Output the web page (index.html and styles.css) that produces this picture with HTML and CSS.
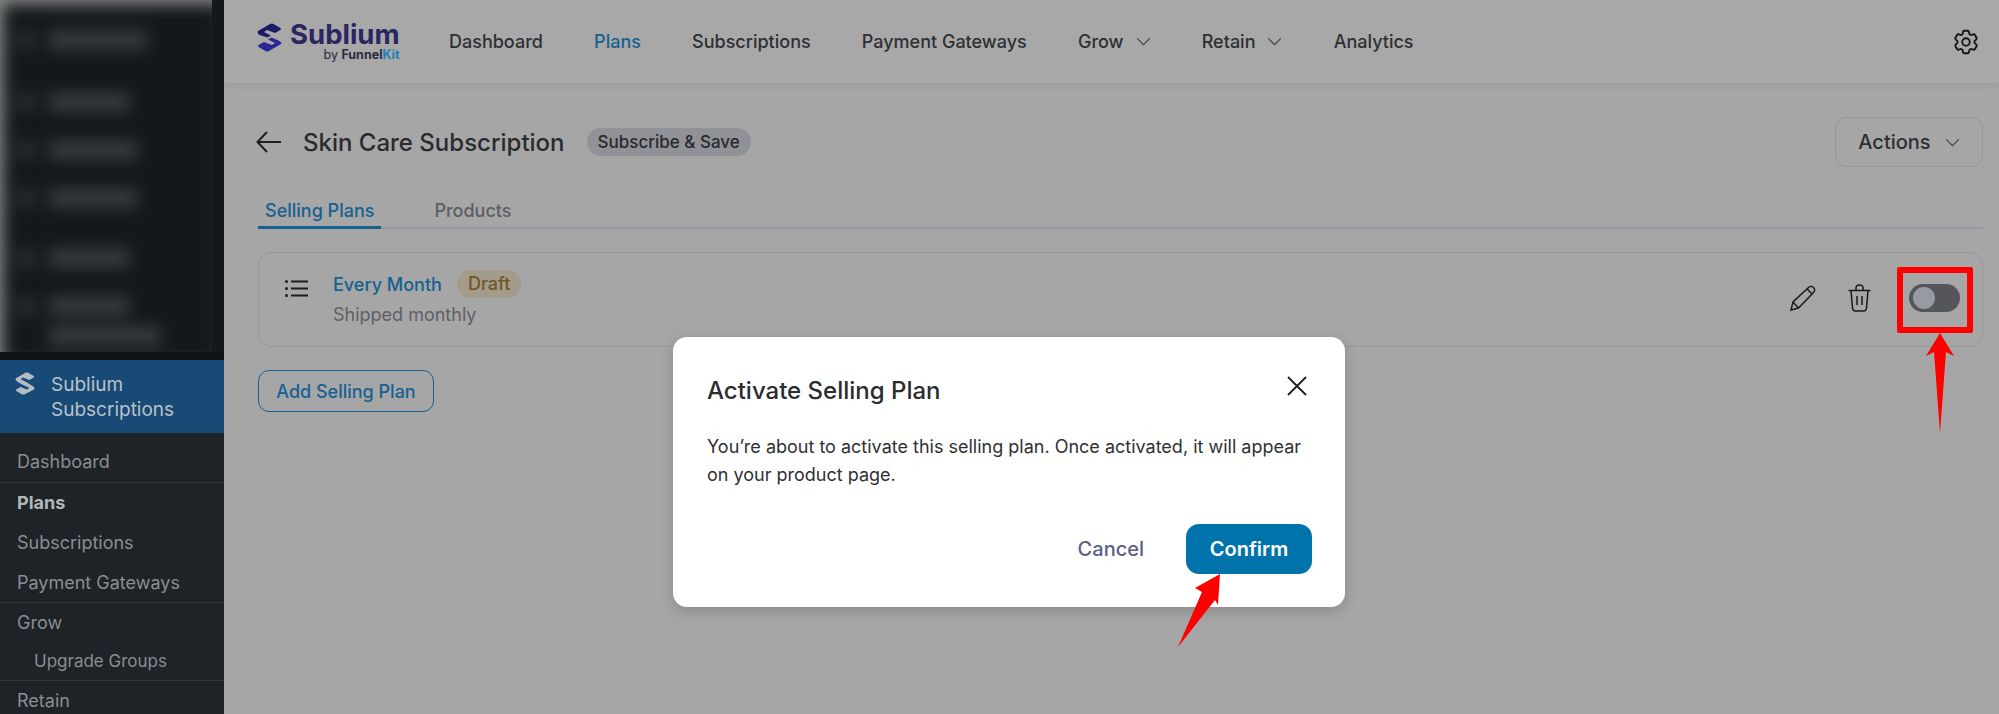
FILE: index.html
```html
<!DOCTYPE html>
<html lang="en">
<head>
    <meta charset="UTF-8">
    <meta name="viewport" content="width=device-width, initial-scale=1.0">
    <title>Sublium - Skin Care Subscription</title>
    <link rel="stylesheet" href="styles.css">
</head>
<body>
    <div class="page">
        <aside class="sidebar">
            <div class="sidebar-top">
                <div class="blurred">
                    <div class="blur-row row-a"><i></i><b class="w-a"></b></div>
                    <div class="blur-row row-b"><i></i><b class="w-b"></b></div>
                    <div class="blur-row row-c"><i></i><b class="w-c"></b></div>
                    <div class="blur-row row-c"><i></i><b class="w-c"></b></div>
                    <div class="blur-row row-d"><i></i><b class="w-b"></b></div>
                    <div class="blur-row row-c"><i></i><b class="w-b"></b></div>
                    <div class="blur-row row-e"><i class="empty"></i><b class="w-d"></b></div>
                </div>
                <div class="strip"></div>
            </div>
            <div class="sidebar-gap"></div>
            <div class="sidebar-active">
                <svg class="sidebar-logo" viewBox="0 0 25 29">
                    <path d="M1 8 13 1c1.200-.7 2.300-.7 3.500 0L23 4.800c1.200.7 1.200 1.700 0 2.400L18 10 10 7 7 9l7 3.500 8.500 5.500c2 1.200 2.300 3.300 1.500 4L12 28c-1.200.7-2.300.7-3.500 0L2 24.200c-1.200-.7-1.200-1.700 0-2.400L7 19l8 3 3-2-8-3.500L2.500 12C.5 10.800.2 8.700 1 8Z" fill="#b4bcc3"/>
                </svg>
                <span>Sublium<br>Subscriptions</span>
            </div>
            <nav class="side-menu">
                <div class="side-group">
                    <a>Dashboard</a>
                </div>
                <div class="side-group">
                    <a class="current">Plans</a>
                    <a>Subscriptions</a>
                    <a class="short">Payment Gateways</a>
                </div>
                <div class="side-group">
                    <a>Grow</a>
                    <a class="sub short">Upgrade Groups</a>
                </div>
                <div class="side-group">
                    <a>Retain</a>
                </div>
            </nav>
        </aside>

        <main class="main">
            <header class="topbar">
                <div class="brand">
                    <svg class="brand-mark" viewBox="0 0 25 29">
                        <path d="M1 8 13 1c1.200-.7 2.300-.7 3.500 0L23 4.800c1.200.7 1.200 1.700 0 2.400L18 10 10 7 7 9l7 3.500-3.500 2L2.500 12C.5 10.800.2 8.700 1 8Z" fill="#1d1a66"/>
                        <path d="M24 21 12 28c-1.200.7-2.300.7-3.500 0L2 24.200c-1.200-.7-1.200-1.700 0-2.400L7 19l8 3 3-2-7-3.500 3.500-2L22.500 18c2 1.200 2.300 2.300 1.500 3Z" fill="#2a2794"/>
                    </svg>
                    <div class="brand-text">
                        <div class="brand-name">Sublium</div>
                        <div class="brand-by">by <b>Funnel</b><b class="kit">Kit</b></div>
                    </div>
                </div>
                <nav class="nav">
                    <a>Dashboard</a>
                    <a class="active">Plans</a>
                    <a>Subscriptions</a>
                    <a>Payment Gateways</a>
                    <a>Grow <svg class="chev" viewBox="0 0 16 10"><path d="M1 1.500 8 8.500 15 1.500"/></svg></a>
                    <a>Retain <svg class="chev" viewBox="0 0 16 10"><path d="M1 1.500 8 8.500 15 1.500"/></svg></a>
                    <a>Analytics</a>
                </nav>
                <svg class="gear" viewBox="0 0 24 24" fill="none" stroke="#151515" stroke-width="1.500">
                    <path d="M9.594 3.94c.09-.542.56-.94 1.11-.94h2.593c.55 0 1.02.398 1.11.94l.213 1.281c.063.374.313.686.645.87.074.04.147.083.22.127.325.196.72.257 1.075.124l1.217-.456a1.125 1.125 0 0 1 1.37.49l1.296 2.247a1.125 1.125 0 0 1-.26 1.431l-1.003.827c-.293.241-.438.613-.43.992a7.723 7.723 0 0 1 0 .255c-.008.378.137.75.43.991l1.004.827c.424.35.534.955.26 1.43l-1.298 2.247a1.125 1.125 0 0 1-1.369.491l-1.217-.456c-.355-.133-.75-.072-1.076.124a6.47 6.47 0 0 1-.22.128c-.331.183-.581.495-.644.869l-.213 1.281c-.09.543-.56.94-1.11.94h-2.594c-.55 0-1.019-.398-1.11-.94l-.213-1.281c-.062-.374-.312-.686-.644-.87a6.52 6.52 0 0 1-.22-.127c-.325-.196-.72-.257-1.076-.124l-1.217.456a1.125 1.125 0 0 1-1.369-.49l-1.297-2.247a1.125 1.125 0 0 1 .26-1.431l1.004-.827c.292-.24.437-.613.43-.991a6.932 6.932 0 0 1 0-.255c.007-.38-.138-.751-.43-.992l-1.004-.827a1.125 1.125 0 0 1-.26-1.43l1.297-2.247a1.125 1.125 0 0 1 1.37-.491l1.216.456c.356.133.751.072 1.076-.124.072-.044.146-.086.22-.128.332-.183.582-.495.644-.869l.214-1.28Z"/>
                    <circle cx="12" cy="12" r="3"/>
                </svg>
            </header>

            <section class="content">
                <div class="title-row">
                    <svg class="back" viewBox="0 0 26 22"><path d="M25 11H2M11 1 1.500 11 11 21"/></svg>
                    <h1>Skin Care Subscription</h1>
                    <span class="pill">Subscribe &amp; Save</span>
                    <button class="actions">Actions <svg class="chev" viewBox="0 0 16 10"><path d="M1 1.500 8 8.500 15 1.500"/></svg></button>
                </div>

                <div class="tabs">
                    <a class="tab selected">Selling Plans</a>
                    <a class="tab">Products</a>
                </div>

                <div class="plan-card">
                    <svg class="list-icon" viewBox="0 0 23 17">
                        <path d="M6 1.500H23M6 8.500H23M6 15.500H23" stroke="#1c1c1c" stroke-width="2"/>
                        <circle cx="1.500" cy="1.500" r="1.500"/><circle cx="1.500" cy="8.500" r="1.500"/><circle cx="1.500" cy="15.500" r="1.500"/>
                    </svg>
                    <div class="plan-info">
                        <div class="plan-name">Every Month <span class="draft">Draft</span></div>
                        <div class="plan-sub">Shipped monthly</div>
                    </div>
                    <svg class="pencil" viewBox="0 0 26 26"><path d="M1 25 3 17 18.500 2.500c1.500-1.500 3.500-1.500 5 0 1.500 1.500 1.500 3.500 0 5L8.500 23 1 25ZM3 17 8.500 23M17 4 22 9"/></svg>
                    <svg class="trash" viewBox="0 0 23 28"><path d="M.5 6.500H22.500M3 6.500 4.500 24c.2 2 1.500 3 3 3h8c1.500 0 2.800-1 3-3L20 6.500M8 6V4c0-2 1.500-3 3.500-3S15 2 15 4V6M9 12V21M14 12V21"/></svg>
                    <div class="toggle"><span class="knob"></span></div>
                </div>

                <button class="add-plan">Add Selling Plan</button>
            </section>
        </main>

        <!-- annotations -->
        <div class="mark-box"></div>
        <svg class="mark-arrow up" viewBox="0 0 30 102"><path d="M15 1 29 24 21 20 15 101 9 20 1 24Z"/></svg>
        <svg class="mark-arrow confirm" viewBox="0 0 44 76"><path d="M43 2 18 16 25 20 1 75 38 28 41 33Z"/></svg>

        <div class="modal">
            <div class="modal-head">
                <h2>Activate Selling Plan</h2>
                <svg class="close" viewBox="0 0 20 20"><path d="M1 1 19 19M19 1 1 19"/></svg>
            </div>
            <p>You’re about to activate this selling plan. Once activated, it will appear on your product page.</p>
            <div class="modal-foot">
                <button class="cancel">Cancel</button>
                <button class="confirm-btn">Confirm</button>
            </div>
        </div>
    </div>
</body>
</html>
```

FILE: styles.css
```css
* {
    box-sizing: border-box;
}
body {
    margin: 0;
    font-family: Inter, "Liberation Sans", sans-serif;
    background: #a6a6a6;
}
button {
    font-family: inherit;
}
.page {
    position: relative;
    display: flex;
    height: 714px;
    overflow: hidden;
}

/* wp sidebar */
.sidebar {
    width: 224px;
    flex-shrink: 0;
    background: #1d2327;
    font-size: 18px;
}
.sidebar-top {
    display: flex;
    height: 352px;
    overflow: hidden;
    background: #8b8b8b;
}
.blurred {
    flex: 1;
    margin: 4px -12px -12px 3px;
    padding: 0 0 0 14px;
    background: #13181b;
    filter: blur(8px);
}
.strip {
    position: relative;
    width: 12px;
    background: #13181b;
}
.blur-row {
    display: flex;
    align-items: center;
    gap: 14px;
    height: 18px;
}
.row-a { margin-top: 27px; }
.row-b { margin-top: 44px; }
.row-c { margin-top: 30px; }
.row-d { margin-top: 42px; }
.row-e { margin-top: 12px; }
.blur-row i {
    width: 18px;
    height: 18px;
    border-radius: 50%;
    background: #2f3437;
}
.blur-row i.empty {
    background: none;
}
.blur-row b {
    height: 18px;
    background: #383d40;
}
.w-a { width: 98px; }
.w-b { width: 80px; }
.w-c { width: 88px; }
.w-d { width: 112px; }
.sidebar-gap {
    height: 8px;
    background: #101315;
}
.sidebar-active {
    display: flex;
    gap: 16px;
    height: 73px;
    padding: 12px 0 0 15px;
    background: #174a74;
    color: #b9c1c8;
    font-size: 19px;
    line-height: 25px;
}
.sidebar-logo {
    width: 20px;
    height: 23px;
}
.side-menu {
    padding-top: 9px;
}
.side-group {
    border-bottom: 1px solid #33383c;
}
.side-group:last-child {
    border-bottom: none;
}
.side-group a {
    display: block;
    height: 40px;
    line-height: 40px;
    padding-left: 17px;
    color: #8a8e91;
    white-space: nowrap;
}
.side-group a.short {
    height: 39px;
    line-height: 39px;
}
.side-group a.sub {
    height: 37px;
    line-height: 37px;
    padding-left: 34px;
    font-size: 17px;
}
.side-group a.current {
    color: #b4b6b8;
    font-weight: 700;
}

/* plugin page */
.main {
    flex: 1;
    min-width: 0;
}
.topbar {
    display: flex;
    align-items: center;
    height: 83px;
    padding: 0 18px 0 33px;
    box-shadow: 0 2px 8px rgba(0, 0, 0, 0.08);
    background: #a8a8a8;
}
.brand {
    display: flex;
    gap: 8px;
    width: 192px;
    margin-top: -2px;
}
.brand-mark {
    width: 25px;
    height: 29px;
    margin-top: 3px;
}
.brand-name {
    font-size: 27.500px;
    font-weight: 700;
    line-height: 28px;
    color: #292661;
}
.brand-by {
    font-size: 12.500px;
    line-height: 14px;
    text-align: right;
    color: #2a2a44;
}
.kit {
    color: #1f82b8;
}
.nav {
    display: flex;
    flex: 1;
    gap: 51.200px;
    font-size: 18px;
    font-weight: 450;
    color: #2e2f33;
}
.nav .active {
    color: #17618f;
}
.nav a {
    display: flex;
    align-items: center;
    gap: 12px;
    white-space: nowrap;
}
.chev {
    width: 15px;
    height: 9px;
    fill: none;
    stroke: #3f4045;
    stroke-width: 1.300;
}
.gear {
    width: 30px;
    height: 30px;
}
.content {
    padding: 34px 16px 0 34px;
}
.title-row {
    display: flex;
    align-items: center;
    height: 50px;
}
.back {
    width: 26px;
    height: 22px;
    margin-left: -2px;
    fill: none;
    stroke: #1e1e1e;
    stroke-width: 2;
}
h1 {
    margin: 0 0 0 21px;
    font-size: 24px;
    font-weight: 500;
    color: #2a2b2e;
}
.pill {
    margin-left: 22px;
    padding: 0 11px;
    height: 28px;
    line-height: 28px;
    border-radius: 14px;
    font-size: 17px;
    font-weight: 450;
    background: #909298;
    color: #28292d;
}
.actions {
    display: flex;
    align-items: center;
    justify-content: center;
    gap: 14px;
    width: 148px;
    height: 50px;
    margin-left: auto;
    border: 1.500px solid #96979d;
    border-radius: 11px;
    background: none;
    font-size: 20px;
    font-weight: 500;
    color: #2e2f33;
}
.tabs {
    display: flex;
    gap: 46px;
    height: 45px;
    margin-top: 17px;
    border-bottom: 2px solid #96979f;
}
.tab {
    height: 45px;
    padding: 14px 7px 0;
    line-height: 26px;
    font-size: 18px;
    font-weight: 450;
    color: #5d5e64;
}
.tab.selected {
    color: #17618f;
    border-bottom: 3px solid #17618f;
}
.plan-card {
    display: flex;
    align-items: center;
    height: 95px;
    margin-top: 23px;
    padding: 0 22px 4px 26px;
    border: 1.500px solid #96979f;
    border-radius: 13px;
}
.list-icon {
    width: 23px;
    height: 17px;
    margin-bottom: 18px;
    fill: #1c1c1c;
}
.plan-info {
    flex: 1;
    margin-left: 25px;
    font-size: 18px;
}
.plan-name {
    display: flex;
    align-items: center;
    gap: 15px;
    height: 28px;
    color: #17618f;
    font-weight: 450;
}
.draft {
    padding: 0 11px;
    height: 28px;
    line-height: 28px;
    border-radius: 14px;
    background: #a39c8a;
    color: #6f5527;
}
.plan-sub {
    margin-top: 6px;
    color: #5f6065;
}
.pencil, .trash {
    fill: none;
    stroke: #1a1a1a;
    stroke-width: 1.500;
}
.pencil {
    width: 26px;
    height: 26px;
}
.trash {
    width: 23px;
    height: 28px;
    margin-left: 32px;
}
.toggle {
    display: flex;
    align-items: center;
    width: 51px;
    height: 28px;
    margin-left: 38px;
    padding-left: 4px;
    border-radius: 14px;
    background: #55565b;
}
.knob {
    width: 22px;
    height: 22px;
    border-radius: 50%;
    background: #989aa1;
}
.add-plan {
    display: block;
    width: 176px;
    height: 42px;
    margin-top: 23px;
    border: 1.500px solid #17618f;
    border-radius: 11px;
    background: none;
    font-size: 18px;
    font-weight: 450;
    color: #17618f;
}

/* red marks sit on top of the screenshot */
.mark-box {
    position: absolute;
    left: 1897px;
    top: 267px;
    width: 76px;
    height: 66px;
    border: 6px solid #fe0000;
    border-radius: 2px;
}
.mark-arrow {
    position: absolute;
    fill: #fe0000;
    z-index: 2;
}
.mark-arrow.up {
    left: 1925px;
    top: 332px;
    width: 30px;
    height: 102px;
}
.mark-arrow.confirm {
    left: 1177px;
    top: 572px;
    width: 44px;
    height: 76px;
}

.modal {
    position: absolute;
    left: 673px;
    top: 337px;
    width: 672px;
    height: 270px;
    padding: 0 34px;
    border-radius: 14px;
    background: #fff;
    box-shadow: 0 4px 14px rgba(0, 0, 0, 0.18);
}
.modal-head {
    display: flex;
    align-items: center;
    justify-content: space-between;
    height: 84px;
    padding-top: 23px;
}
h2 {
    margin: 0;
    font-size: 24px;
    font-weight: 500;
    color: #2b2c30;
}
.close {
    width: 20px;
    height: 20px;
    margin: -10px 4px 0 0;
    fill: none;
    stroke: #1e1e1e;
    stroke-width: 1.800;
}
.modal p {
    margin: 12px 0 0;
    font-size: 18px;
    line-height: 28px;
    color: #2f3034;
}
.modal-foot {
    display: flex;
    justify-content: flex-end;
    align-items: center;
    gap: 42px;
    margin: 35px -1px 0 0;
}
.cancel {
    border: none;
    padding: 0;
    background: none;
    font-size: 20px;
    font-weight: 500;
    color: #5d5f86;
}
.confirm-btn {
    width: 126px;
    height: 50px;
    border: none;
    border-radius: 13px;
    background: #0073aa;
    color: #fff;
    font-size: 20px;
    font-weight: 600;
}
```
